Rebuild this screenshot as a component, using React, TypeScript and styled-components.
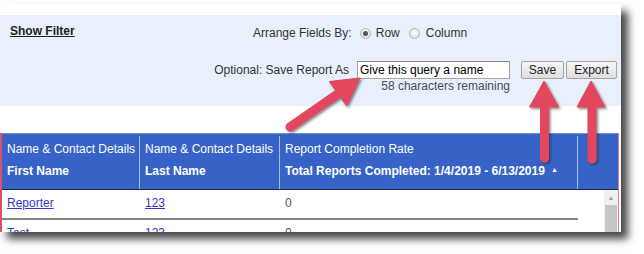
import React from "react";
import styled, { createGlobalStyle } from "styled-components";

const GlobalStyle = createGlobalStyle`
  html, body { margin: 0; padding: 0; background: #ffffff; }
  body { font-family: "Liberation Sans", Arial, sans-serif; font-size: 12px; color: #333; }
  * { box-sizing: border-box; }
`;

const Page = styled.div`
  position: relative;
  width: 644px;
  height: 254px;
  overflow: hidden;
  padding-top: 4px;
`;

const Card = styled.div`
  width: 621px;
  height: 228px;
  padding-top: 11px;
  background: #ffffff;
  box-shadow: 7px 7px 8px rgba(0, 0, 0, 0.72);
  display: flex;
  flex-direction: column;
`;

const FilterPanel = styled.div`
  height: 91px;
  background: #e7f0fc;
  padding: 8px 4px 0 10px;
  display: flex;
  flex-direction: column;
`;

const TopRow = styled.div`
  display: grid;
  grid-template-columns: 243px auto;
  height: 16px;
`;

const ShowFilter = styled.a`
  font-weight: bold;
  color: #222;
  text-decoration: underline;
  line-height: 16px;
  justify-self: start;
`;

const ArrangeGroup = styled.div`
  display: flex;
  align-items: center;
  margin-top: 2px;
  height: 16px;
  color: #333;
`;

const Radio = styled.span<{ $checked?: boolean }>`
  width: 11px;
  height: 11px;
  border-radius: 50%;
  border: 1px solid #b3b3b3;
  background: radial-gradient(circle at 50% 40%, #ffffff 0%, #e6e6e6 60%, #d4d4d4 100%);
  display: inline-flex;
  align-items: center;
  justify-content: center;
  margin: 0 ${(p) => (p.$checked ? 5 : 6)}px 0 ${(p) => (p.$checked ? 8 : 9)}px;
  &::after {
    content: "";
    width: 5px;
    height: 5px;
    border-radius: 50%;
    background: ${(p) => (p.$checked ? "#555" : "transparent")};
  }
`;

const SaveRow = styled.div`
  display: flex;
  justify-content: flex-end;
  align-items: flex-start;
  margin-top: 22px;
`;

const SaveLabel = styled.span`
  line-height: 18px;
  color: #333;
  margin-right: 8px;
`;

const NameField = styled.div`
  display: flex;
  flex-direction: column;
  align-items: flex-end;
  width: 153px;
  margin-right: 11px;
`;

const NameInput = styled.input`
  width: 153px;
  height: 18px;
  border: 1px solid #a6a6a6;
  border-top-color: #8c8c8c;
  background: #fff;
  font-family: "Liberation Sans", Arial, sans-serif;
  font-size: 12px;
  color: #000;
  padding: 0 2px;
  outline: none;
`;

const Hint = styled.span`
  line-height: 14px;
  color: #4b4b58;
`;

const Button = styled.button<{ $w: number; $gap?: number }>`
  width: ${(p) => p.$w}px;
  height: 18px;
  margin-left: ${(p) => p.$gap ?? 0}px;
  border: 1px solid #a3a3a3;
  border-radius: 2px;
  background: linear-gradient(#f7f7f7, #dedede);
  font-family: "Liberation Sans", Arial, sans-serif;
  font-size: 12px;
  color: #222;
  padding: 0;
  line-height: 16px;
`;

const Table = styled.div`
  margin-top: 27px;
  width: 619px;
  border-left: 2px solid #d9526a;
  border-right: 1px solid #e07a8e;
  display: flex;
  flex-direction: column;
`;

const HeaderRow = styled.div`
  display: grid;
  grid-template-columns: 138px 140px 298px 40px;
  height: 57px;
  background: #3763c8;
  border-top: 1px solid #6f8fd6;
  border-bottom: 1px solid #17264c;
`;

const HeaderCell = styled.div<{ $last?: boolean }>`
  display: flex;
  flex-direction: column;
  gap: 8px;
  padding: 6px 0 0 5px;
  color: #ffffff;
  border-right: ${(p) => (p.$last ? "none" : "1px solid #a9bdea")};
  margin-top: 2px;
  white-space: nowrap;
`;

const GroupLabel = styled.span`
  line-height: 14px;
`;

const FieldLabel = styled.span`
  line-height: 14px;
  font-weight: bold;
  display: flex;
  align-items: center;
`;

const SortMark = styled.span`
  font-size: 7px;
  margin-left: 6px;
  margin-top: -2px;
`;

const Body = styled.div`
  display: flex;
  height: 42px;
  overflow: hidden;
  background: #fff;
`;

const Rows = styled.div`
  width: 576px;
  display: flex;
  flex-direction: column;
`;

const Row = styled.div`
  display: grid;
  grid-template-columns: 138px 140px 298px;
  height: 30px;
  flex: none;
  border-bottom: 2px solid #858585;
`;

const Cell = styled.div`
  padding: 6px 0 0 5px;
  line-height: 14px;
`;

const Link = styled.a`
  color: #3535cc;
  text-decoration: underline;
`;

const Zero = styled.span`
  color: #555;
`;

const Scrollbar = styled.div`
  width: 15px;
  margin-left: 26px;
  background: #f0f0f0;
  display: flex;
  flex-direction: column;
`;

const ScrollUp = styled.div`
  height: 15px;
  display: flex;
  align-items: center;
  justify-content: center;
  color: #a3a3a3;
  font-size: 7px;
`;

const Thumb = styled.div`
  flex: 1;
  margin: 0 1px;
  background: #c6c6c6;
`;

const Overlay = styled.svg`
  position: absolute;
  left: 0;
  top: 0;
  pointer-events: none;
`;

const ARROW = "#e2475f";

export default function App() {
  return (
    <Page>
      <GlobalStyle />
      <Card>
        <FilterPanel>
          <TopRow>
            <ShowFilter>Show Filter</ShowFilter>
            <ArrangeGroup>
              <span>Arrange Fields By:</span>
              <Radio $checked />
              <span>Row</span>
              <Radio />
              <span>Column</span>
            </ArrangeGroup>
          </TopRow>
          <SaveRow>
            <SaveLabel>Optional: Save Report As</SaveLabel>
            <NameField>
              <NameInput defaultValue="Give this query a name" />
              <Hint>58 characters remaining</Hint>
            </NameField>
            <Button $w={43}>Save</Button>
            <Button $w={51} $gap={2}>
              Export
            </Button>
          </SaveRow>
        </FilterPanel>
        <Table>
          <HeaderRow>
            <HeaderCell>
              <GroupLabel>Name &amp; Contact Details</GroupLabel>
              <FieldLabel>First Name</FieldLabel>
            </HeaderCell>
            <HeaderCell>
              <GroupLabel>Name &amp; Contact Details</GroupLabel>
              <FieldLabel>Last Name</FieldLabel>
            </HeaderCell>
            <HeaderCell>
              <GroupLabel>Report Completion Rate</GroupLabel>
              <FieldLabel>
                Total Reports Completed: 1/4/2019 - 6/13/2019
                <SortMark>▲</SortMark>
              </FieldLabel>
            </HeaderCell>
            <HeaderCell $last />
          </HeaderRow>
          <Body>
            <Rows>
              <Row>
                <Cell>
                  <Link>Reporter</Link>
                </Cell>
                <Cell>
                  <Link>123</Link>
                </Cell>
                <Cell>
                  <Zero>0</Zero>
                </Cell>
              </Row>
              <Row>
                <Cell>
                  <Link>Test</Link>
                </Cell>
                <Cell>
                  <Link>123</Link>
                </Cell>
                <Cell>
                  <Zero>0</Zero>
                </Cell>
              </Row>
            </Rows>
            <Scrollbar>
              <ScrollUp>▲</ScrollUp>
              <Thumb />
            </Scrollbar>
          </Body>
        </Table>
      </Card>
      <Overlay width={644} height={254} viewBox="0 0 644 254">
        <defs>
          <filter id="ash" x="-30%" y="-30%" width="160%" height="160%">
            <feDropShadow dx="1.5" dy="1.5" stdDeviation="1.2" floodColor="#222" floodOpacity="0.55" />
          </filter>
        </defs>
        <g filter="url(#ash)" fill={ARROW} stroke={ARROW}>
          <line x1={290} y1={127} x2={339} y2={93} strokeWidth={9} strokeLinecap="round" />
          <polygon points="360,78 346.7,105.9 329.3,81.5" strokeWidth={1} strokeLinejoin="round" />
          <line x1={544.5} y1={104} x2={544.5} y2={158} strokeWidth={9} strokeLinecap="round" />
          <polygon points="544,81 558.5,107 529.5,107" strokeWidth={1} strokeLinejoin="round" />
          <line x1={592} y1={104} x2={592} y2={159} strokeWidth={9} strokeLinecap="round" />
          <polygon points="591,81 605,107 577,107" strokeWidth={1} strokeLinejoin="round" />
        </g>
      </Overlay>
    </Page>
  );
}
